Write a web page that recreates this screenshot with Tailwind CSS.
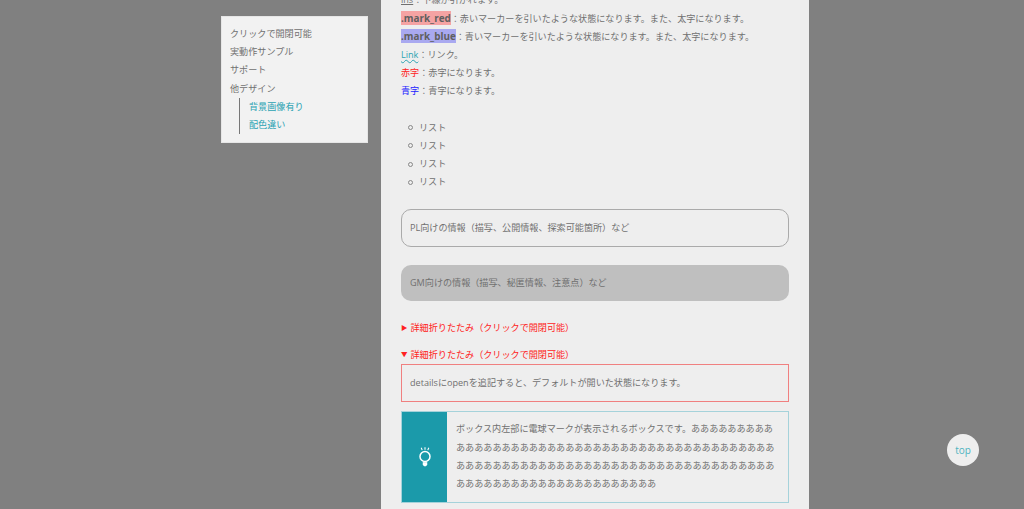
<!DOCTYPE html>
<html lang="ja">
<head>
    <meta charset="UTF-8" />
    <meta name="viewport" content="width=device-width, initial-scale=1.0" />
    <title>Sample</title>
    <script src="https://cdn.jsdelivr.net/npm/@tailwindcss/browser@4"></script>
</head>
<body class="bg-[#808080] text-[#707070] h-[509px] overflow-hidden antialiased font-['Open_Sans','Noto_Sans_CJK_JP',sans-serif] text-[9.1px] leading-[18.2px]">

<div class="flex items-start w-[1024px] h-[509px] overflow-hidden">
    <!-- Side menu -->
    <nav class="ml-[221px] mt-[16px] w-[147px] h-[127px] bg-[#f2f2f2] border border-[#e6e6e6] pl-[8px] pt-[8px] shrink-0">
        <ul>
            <li>クリックで開閉可能</li>
            <li>実動作サンプル</li>
            <li>サポート</li>
            <li>他デザイン
                <ul class="ml-[9px] pl-[9px] border-l border-[#777] text-[#2ba3b2]">
                    <li>背景画像有り</li>
                    <li>配色違い</li>
                </ul>
            </li>
        </ul>
    </nav>

    <!-- Main column -->
    <main class="ml-[13px] w-[428px] h-[509px] bg-[#eeeeee] px-[20px] shrink-0 overflow-hidden">
        <div class="-mt-[8.6px]">
            <p><span class="underline">ins</span>：下線が引かれます。</p>
            <p><b class="bg-[#f5a3a3] font-bold text-[9.9px] leading-none text-[#5f5f5f]">.mark_red</b>：赤いマーカーを引いたような状態になります。また、太字になります。</p>
            <p><b class="bg-[#a9a9f0] font-bold text-[9.9px] leading-none text-[#5f5f5f]">.mark_blue</b>：青いマーカーを引いたような状態になります。また、太字になります。</p>
            <p><a href="#" class="text-[#2ba3b2] underline decoration-wavy decoration-1">Link</a>：リンク。</p>
            <p><span class="text-[#f22]">赤字</span>：赤字になります。</p>
            <p><span class="text-[#22f]">青字</span>：青字になります。</p>

            <ul class="mt-[18px] pl-[7px]">
                <li class="flex items-center gap-[6px]"><span class="w-[5px] h-[5px] rounded-full border border-[#888]"></span>リスト</li>
                <li class="flex items-center gap-[6px]"><span class="w-[5px] h-[5px] rounded-full border border-[#888]"></span>リスト</li>
                <li class="flex items-center gap-[6px]"><span class="w-[5px] h-[5px] rounded-full border border-[#888]"></span>リスト</li>
                <li class="flex items-center gap-[6px]"><span class="w-[5px] h-[5px] rounded-full border border-[#888]"></span>リスト</li>
            </ul>

            <div class="mt-[18px] h-[38px] border border-[#aaa] rounded-[10px] px-[8px] flex items-center">PL向けの情報（描写、公開情報、探索可能箇所）など</div>
            <div class="mt-[18px] h-[36px] bg-[#bfbfbf] rounded-[10px] px-[9px] flex items-center">GM向けの情報（描写、秘匿情報、注意点）など</div>

            <p class="mt-[18px] text-[#f22] flex items-center gap-[3px]"><span class="text-[6.5px]">▶</span>詳細折りたたみ（クリックで開閉可能）</p>
            <p class="mt-[8px] text-[#f22] flex items-center gap-[3px]"><span class="text-[6.5px]">▼</span>詳細折りたたみ（クリックで開閉可能）</p>
            <div class="h-[38px] border border-[#f08080] px-[8px] flex items-center">detailsにopenを追記すると、デフォルトが開いた状態になります。</div>

            <div class="mt-[9px] h-[92px] flex border border-[#a5d2da]">
                <div class="w-[45px] bg-[#1b9aaa] flex items-center justify-center shrink-0">
                    <svg width="14" height="20" viewBox="0 0 14 20" fill="none" stroke="#fff" stroke-width="1.5">
                        <circle cx="7" cy="9.5" r="5" />
                        <path d="M5 15.2h4v2.4l-1 1.4h-2l-1-1.4z" fill="#fff" stroke-width="0.5" />
                        <path d="M7 0.2v2.6M3.2 0.8l1 2.3M10.8 0.8l-1 2.3" stroke-width="1.1" />
                    </svg>
                </div>
                <div class="px-[9px] py-[1px] break-all flex items-center">ボックス内左部に電球マークが表示されるボックスです。あああああああああああああああああああああああああああああああああああああああああああああああああああああああああああああああああああああああああああああああああああああああああああああああああああああ</div>
            </div>
        </div>
    </main>
</div>

<!-- Back to top -->
<a href="#" class="fixed left-[947px] top-[434px] w-[32px] h-[32px] rounded-full bg-[#eeeeee] text-[#4fb3c0] flex items-center justify-center text-[10px]">top</a>

</body>
</html>
